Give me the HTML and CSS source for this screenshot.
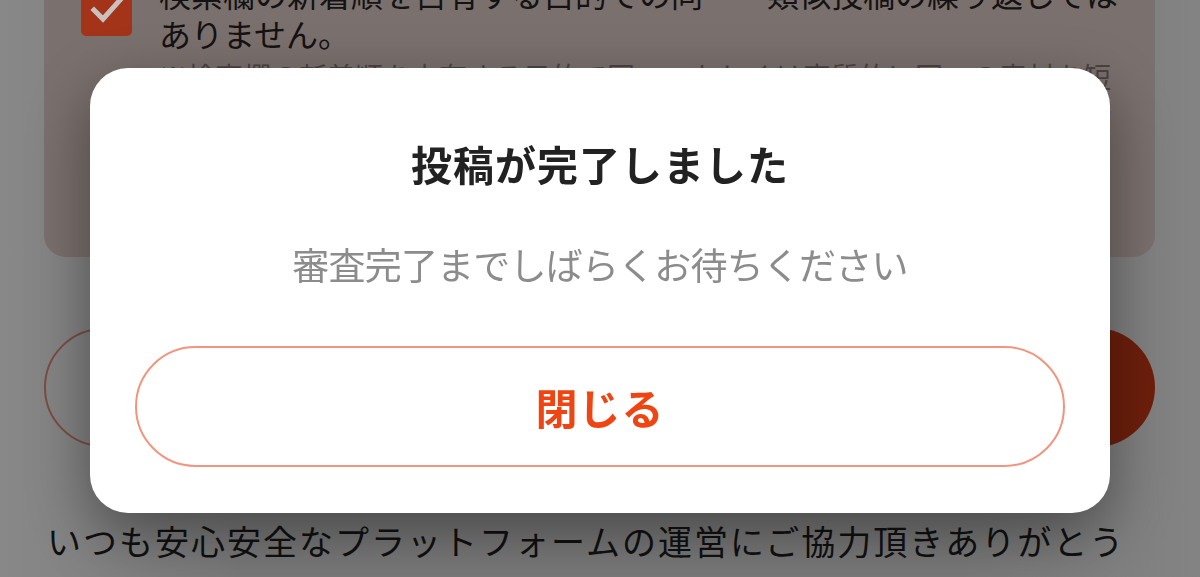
FILE: index.html
```html
<!DOCTYPE html>
<html lang="ja">
<head>
<meta charset="utf-8">
<title>投稿が完了しました</title>
<link rel="stylesheet" href="styles.css">
</head>
<body>
<div class="page">
  <section class="card">
    <div class="checkbox">
      <svg viewBox="0 0 51 51" width="51" height="51" aria-hidden="true">
        <polyline points="13,25 22,34 39,15" fill="none" stroke="#c9c1be" stroke-width="5" stroke-linecap="square" stroke-linejoin="miter"/>
      </svg>
    </div>
    <div class="card-text">
      <p class="agree">検索欄の新着順を占有する目的での同一・類似投稿の繰り返しではありません。</p>
      <p class="note">※検索欄の新着順を占有する目的で同一、もしくは実質的に同一の素材を短期間に繰り返し投稿することはご遠慮ください。違反が確認された場合は投稿を削除させていただく場合があります。</p>
    </div>
  </section>
  <div class="actions">
    <div class="btn-outline"></div>
    <div class="btn-fill"></div>
  </div>
  <p class="thanks">いつも安心安全なプラットフォームの運営にご協力頂きありがとうございます。</p>
</div>

<div class="overlay">
  <div class="modal" role="dialog">
    <h2 class="modal-title">投稿が完了しました</h2>
    <p class="modal-text">審査完了までしばらくお待ちください</p>
    <button class="modal-btn" type="button">閉じる</button>
  </div>
</div>
</body>
</html>
```
FILE: styles.css
```css
html, body {
  margin: 0;
  padding: 0;
}
body {
  width: 1200px;
  height: 577px;
  overflow: hidden;
  background: linear-gradient(90deg, #888 0%, #7a7a7a 20%, #7a7a7a 80%, #838383 100%);
  font-family: "Noto Sans CJK JP", "Noto Sans", sans-serif;
  color: #111;
}
p, h2 { margin: 0; }

.page {
  padding: 0 45px 0 44px;
}

.card {
  margin-top: -40px;
  background: #7a706d;
  border-radius: 22px;
  padding: 13px 20px 34px 37px;
  display: flex;
  gap: 27px;
  align-items: flex-start;
}
.checkbox {
  flex: none;
  width: 51px;
  height: 51px;
  margin-top: 12px;
  background: #a3341a;
  border-radius: 5px;
}
.checkbox svg { display: block; }
.card-text {
  flex: 1;
}
.agree {
  font-size: 32px;
  line-height: 40px;
  color: #141212;
}
.note {
  margin-top: 2px;
  font-size: 28px;
  line-height: 42px;
  color: #4a4341;
  height: 168px;
  overflow: hidden;
}

.actions {
  margin-top: 71px;
  display: flex;
  gap: 22px;
}
.btn-outline, .btn-fill {
  flex: 1;
  height: 119px;
  border-radius: 60px;
  box-sizing: border-box;
}
.btn-outline {
  border: 2px solid #7c4d44;
}
.btn-fill {
  background: #6e1f0b;
}

.thanks {
  margin-top: 67px;
  margin-left: 3px;
  font-size: 34px;
  line-height: 54px;
  letter-spacing: 2px;
  color: #111;
}

.overlay {
  position: fixed;
  inset: 0;
  display: flex;
  align-items: center;
  justify-content: center;
  padding-top: 4px;
  box-sizing: border-box;
}
.modal {
  width: 1020px;
  box-sizing: border-box;
  background: #fff;
  border-radius: 38px;
  padding: 70px 45px 46px;
  display: flex;
  flex-direction: column;
  align-items: center;
  box-shadow: 0 22px 60px rgba(0, 0, 0, 0.4);
}
.modal-title {
  font-size: 41px;
  line-height: 50px;
  font-weight: 700;
  color: #222;
  letter-spacing: 1px;
}
.modal-text {
  margin-top: 51px;
  font-size: 37px;
  line-height: 50px;
  letter-spacing: -0.8px;
  color: #8c8c8c;
}
.modal-btn {
  margin-top: 57px;
  width: 930px;
  height: 121px;
  border: 2.5px solid #f2957f;
  border-radius: 61px;
  background: #fff;
  font-family: inherit;
  font-size: 42px;
  font-weight: 700;
  color: #ef4513;
  letter-spacing: 1px;
  padding: 0;
  cursor: pointer;
}
```
